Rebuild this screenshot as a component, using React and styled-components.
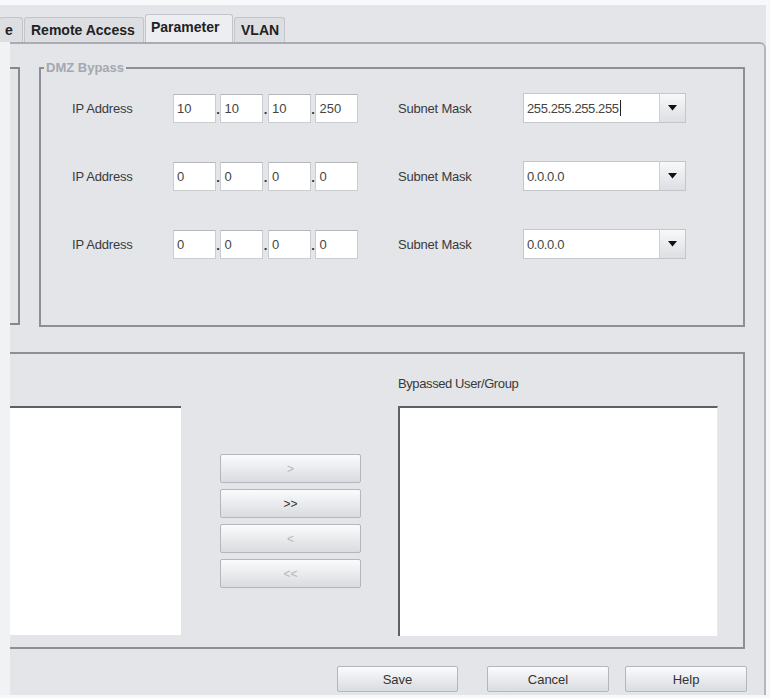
import React from 'react';
import styled, { createGlobalStyle } from 'styled-components';

const Global = createGlobalStyle`
  html, body { margin: 0; padding: 0; background: #f7f8f9; }
  body { font-family: "Liberation Sans", Arial, sans-serif; color: #333; }
`;

const Page = styled.div`
  width: 770px;
  height: 698px;
  overflow: hidden;
  background: #f7f8f9;
`;

const Frame = styled.div`
  margin-top: 5px;
  width: 766px;
  height: 690px;
  background: #e3e5e9;
  display: flex;
  flex-direction: column;
`;

const TabStrip = styled.div`
  height: 37px;
  display: flex;
  align-items: flex-end;
  margin-left: -1px;
`;

const Tab = styled.div`
  height: ${p => (p.active ? 28 : 25)}px;
  width: ${p => (p.w ? `${p.w}px` : 'auto')};
  padding: 0 ${p => p.pad ?? 6}px;
  display: flex;
  align-items: center;
  font-size: 14px;
  font-weight: bold;
  color: #222;
  background: ${p => (p.active ? '#eceef1' : '#dcdee2')};
  border: 1px solid #c2c5ca;
  border-bottom: none;
  border-radius: 3px 3px 0 0;
  margin-right: 1px;
  box-sizing: border-box;
  padding-bottom: ${p => (p.active ? 4 : 0)}px;
`;

const Body = styled.div`
  flex: 1;
  display: flex;
`;

const Gutter = styled.div`
  width: 10px;
  background: #f1f2f4;
`;

const Panel = styled.div`
  flex: 1;
  border-top: 2px solid #a9adb3;
  border-right: 2px solid #b4b8bd;
  border-top-right-radius: 6px;
  display: flex;
  flex-direction: column;
`;

const TopRow = styled.div`
  display: flex;
  margin-top: 23px;
  height: 260px;
`;

const SideBox = styled.div`
  width: 10px;
  height: 258px;
  border: 2px solid #85898f;
  border-left: none;
  box-sizing: border-box;
`;

const Group = styled.div`
  position: relative;
  margin-left: 19px;
  width: 706px;
  height: 260px;
  border: 2px solid #8c9096;
  box-sizing: border-box;
  padding: 24px 0 0 31px;
  display: grid;
  grid-template-columns: 101px 185px 40px 125px 163px;
  grid-auto-rows: 30px;
  row-gap: 38px;
  align-items: center;
`;

const Legend = styled.span`
  position: absolute;
  top: -9px;
  left: 3px;
  padding: 0 2px;
  background: #e3e5e9;
  font-size: 13px;
  font-weight: bold;
  color: #a3a8b0;
`;

const Label = styled.span`
  font-size: 13px;
  color: #3a3a3a;
  letter-spacing: -0.2px;
`;

const IpGroup = styled.div`
  display: flex;
  align-items: stretch;
  height: 29px;
`;

const Octet = styled.div`
  width: 43px;
  box-sizing: border-box;
  background: #fff;
  border: 1px solid #c9ccd1;
  border-top-color: #b4b7bc;
  font-size: 13px;
  color: #444;
  display: flex;
  align-items: center;
  padding-left: 3px;
`;

const Dot = styled.span`
  width: 5px;
  font-size: 13px;
  font-weight: bold;
  color: #333;
  display: flex;
  align-items: center;
  justify-content: center;
  padding-top: 3px;
`;

const Spacer = styled.span``;

const Combo = styled.div`
  display: flex;
  height: 30px;
  border: 1px solid #c3c6cb;
  box-sizing: border-box;
  background: #fff;
`;

const ComboText = styled.div`
  flex: 1;
  display: flex;
  align-items: center;
  padding-left: 3px;
  font-size: 13px;
  color: #444;
  letter-spacing: -0.4px;
`;

const Caret = styled.span`
  display: inline-block;
  width: 1px;
  height: 16px;
  background: #222;
  margin-left: 1px;
`;

const ComboBtn = styled.div`
  width: 25px;
  border-left: 1px solid #cdd0d4;
  background: linear-gradient(#f7f8f9, #dcdfe3);
  display: flex;
  align-items: center;
  justify-content: center;
`;

const BottomBox = styled.div`
  margin-top: 25px;
  width: 735px;
  height: 297px;
  border: 2px solid #8c9096;
  border-left: none;
  box-sizing: border-box;
  display: flex;
  align-items: flex-start;
`;

const LeftList = styled.div`
  margin-top: 52px;
  width: 171px;
  height: 229px;
  background: #fff;
  border-top: 2px solid #5d6166;
  box-sizing: border-box;
`;

const Mover = styled.div`
  margin-left: 39px;
  margin-top: 100px;
  width: 141px;
  display: flex;
  flex-direction: column;
  gap: 6px;
`;

const Button = styled.div`
  height: ${p => p.h ?? 29}px;
  width: ${p => p.w ?? 141}px;
  box-sizing: border-box;
  border: 1px solid #b3b7bc;
  border-radius: 2px;
  background: linear-gradient(#fafbfc, #e6e8eb 60%, #d9dce0);
  display: flex;
  align-items: center;
  justify-content: center;
  font-size: ${p => p.fs ?? 12}px;
  color: ${p => (p.disabled ? '#b5b8bd' : '#333')};
`;

const RightCol = styled.div`
  margin-left: 37px;
  display: flex;
  flex-direction: column;
`;

const ListLabel = styled.span`
  margin-top: 22px;
  height: 30px;
  font-size: 13px;
  color: #3a3a3a;
  letter-spacing: -0.4px;
`;

const List = styled.div`
  width: 320px;
  height: 230px;
  background: #fff;
  border-top: 2px solid #5d6166;
  border-left: 2px solid #5d6166;
  border-right: 1px solid #e8eaed;
  box-sizing: border-box;
`;

const Footer = styled.div`
  display: flex;
  margin-top: 17px;
  padding-left: 327px;
`;

const FootButton = styled(Button)`
  margin-right: ${p => p.mr}px;
  font-size: 13px;
  color: #333;
`;

const Arrow = () => (
  <svg width="9" height="6" viewBox="0 0 9 6">
    <path d="M0 0 H9 L4.5 5.5 Z" fill="#111" />
  </svg>
);

const rows = [
  { ip: ['10', '10', '10', '250'], mask: '255.255.255.255', focus: true },
  { ip: ['0', '0', '0', '0'], mask: '0.0.0.0' },
  { ip: ['0', '0', '0', '0'], mask: '0.0.0.0' },
];

const IpRow = ({ ip, mask, focus }) => (
  <>
    <Label>IP Address</Label>
    <IpGroup>
      {ip.map((v, i) => (
        <React.Fragment key={i}>
          {i > 0 && <Dot>.</Dot>}
          <Octet>{v}</Octet>
        </React.Fragment>
      ))}
    </IpGroup>
    <Spacer />
    <Label>Subnet Mask</Label>
    <Combo>
      <ComboText>
        {mask}
        {focus && <Caret />}
      </ComboText>
      <ComboBtn>
        <Arrow />
      </ComboBtn>
    </Combo>
  </>
);

export default function App() {
  return (
    <Page>
      <Global />
      <Frame>
        <TabStrip>
          <Tab w={24} pad={5}>e</Tab>
          <Tab w={120}>Remote Access</Tab>
          <Tab w={88} pad={5} active>Parameter</Tab>
          <Tab w={51}>VLAN</Tab>
        </TabStrip>
        <Body>
          <Gutter />
          <Panel>
            <TopRow>
              <SideBox />
              <Group>
                <Legend>DMZ Bypass</Legend>
                {rows.map((r, i) => (
                  <IpRow key={i} {...r} />
                ))}
              </Group>
            </TopRow>
            <BottomBox>
              <LeftList />
              <Mover>
                <Button disabled>&gt;</Button>
                <Button>&gt;&gt;</Button>
                <Button disabled>&lt;</Button>
                <Button disabled>&lt;&lt;</Button>
              </Mover>
              <RightCol>
                <ListLabel>Bypassed User/Group</ListLabel>
                <List />
              </RightCol>
            </BottomBox>
            <Footer>
              <FootButton w={121} h={26} mr={29}>Save</FootButton>
              <FootButton w={122} h={26} mr={16}>Cancel</FootButton>
              <FootButton w={122} h={26} mr={0}>Help</FootButton>
            </Footer>
          </Panel>
        </Body>
      </Frame>
    </Page>
  );
}
